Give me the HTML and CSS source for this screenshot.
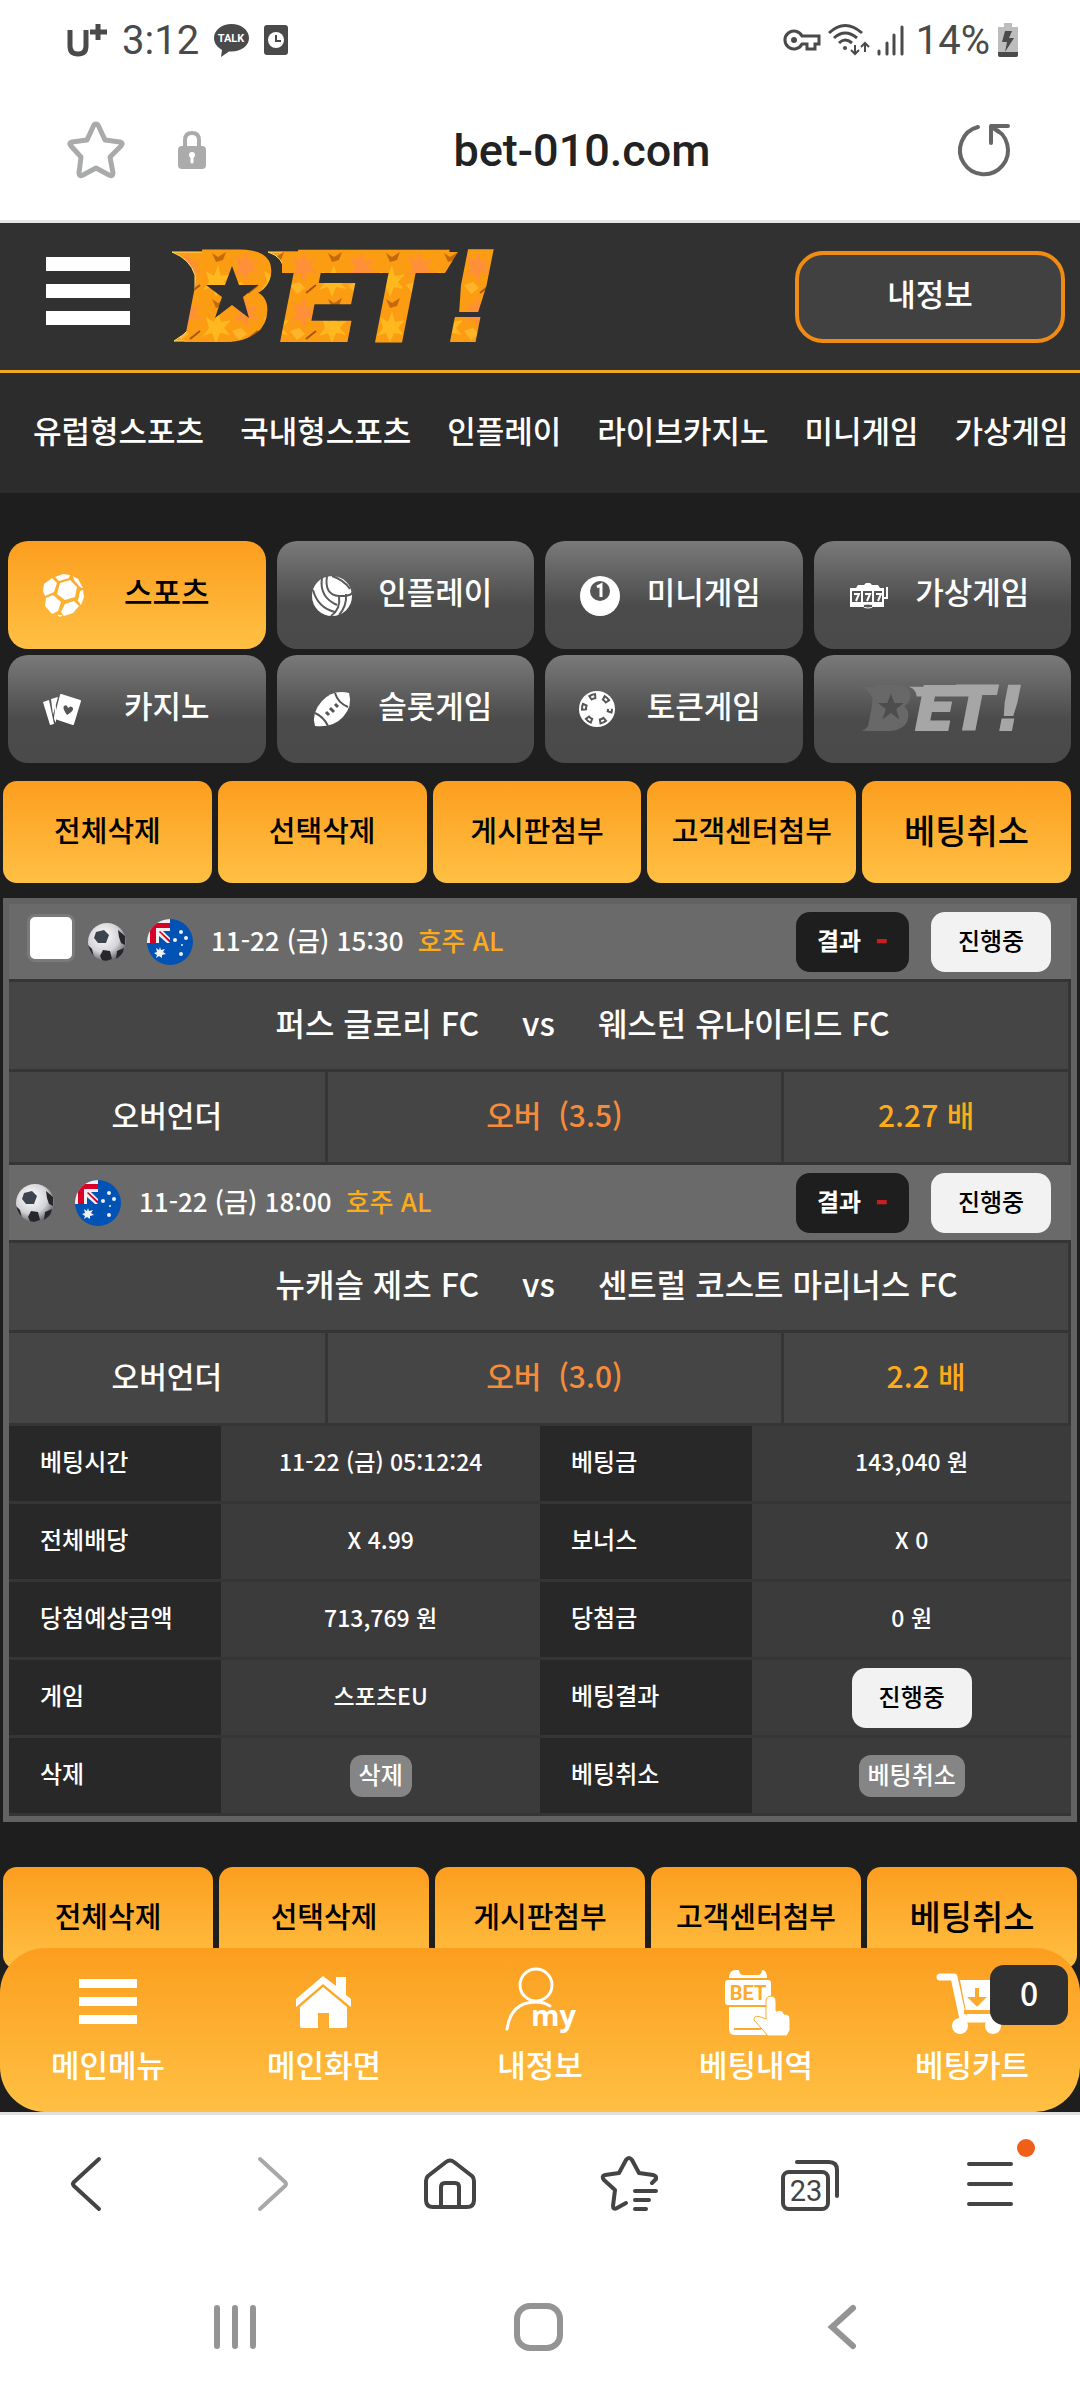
FILE: index.html
```html
<!DOCTYPE html>
<html lang="ko">
<head>
<meta charset="utf-8">
<meta name="viewport" content="width=device-width, initial-scale=1">
<title>bet-010.com</title>
<link rel="stylesheet" href="styles.css">
</head>
<body>

<svg class="defs" aria-hidden="true">
  <defs>
    <pattern id="leaves" width="58" height="46" patternUnits="userSpaceOnUse">
      <rect width="58" height="46" fill="#fc9c12"/>
      <path d="M4 4l8 6 4-10 3 11 10-3-7 8 8 6-11-1-3 10-4-9-10 3 7-8z" fill="#ff8f38"/>
      <path d="M34 20l8 5 4-11 3 11 10-2-7 8 6 7-10-2-4 10-4-10-9 3 6-8z" fill="#ffb81e"/>
      <path d="M40 2l6 4 8-5-3 8-7 2z" fill="#c46a0c"/>
      <path d="M2 34l9-3 6 6-8 6z" fill="#ffb52a"/>
      <path d="M18 42l10-8" stroke="#a8560a" stroke-width="2"/>
    </pattern>
    <radialGradient id="ballShade" cx=".4" cy=".35" r=".7">
      <stop offset="0" stop-color="#fff"/><stop offset=".6" stop-color="#d4d4d8"/><stop offset="1" stop-color="#55565c"/>
    </radialGradient>
    <clipPath id="round"><circle cx="23" cy="23" r="23"/></clipPath>
    <clipPath id="roundBall"><circle cx="20" cy="20" r="19"/></clipPath>
    <symbol id="ball" viewBox="0 0 40 40">
      <circle cx="20" cy="20" r="19" fill="url(#ballShade)"/>
      <g clip-path="url(#roundBall)" fill="#25272b">
        <path d="M9 10l8-2 5 5-3 8-8 0-4-5z" fill="#3c444d"/>
        <path d="M31 8l7 6v9l-4-2-2-6z"/>
        <path d="M16 28l7 1 2 8-9 3-3-6z"/>
        <path d="M0 22l5 5 2 8-6-3zM30 29l7-3-2 8-6 3z"/>
      </g>
    </symbol>
    <symbol id="flag-au" viewBox="0 0 46 46">
      <g clip-path="url(#round)">
        <rect width="46" height="46" fill="#0052b4"/>
        <path d="M0 0h23v24H0z" fill="#f0f0f0"/>
        <path d="M0 4h23v5H9v15H3V4z" fill="#d80027"/>
        <path d="M16 12h7v7zM12 17l8 7h-8z" fill="#0052b4"/>
        <path d="M13 12l10 9v3L12 13z" fill="#d80027"/>
        <path d="M13 28l1 3 4-1-2 3 3 2-4 1 0 3-3-2-3 2 1-3-3-2 3-1-1-4 3 2z" fill="#f0f0f0"/>
        <g fill="#f0f0f0"><circle cx="34" cy="13" r="2"/><circle cx="39" cy="19" r="2"/><circle cx="28" cy="21" r="2"/><circle cx="35" cy="26" r="1"/><circle cx="34" cy="35" r="2"/></g>
      </g>
    </symbol>
  </defs>
</svg>

<div class="statusbar">
  <div class="status-group">
    <svg width="40" height="34" viewBox="0 0 40 34" class="carrier" aria-hidden="true"><path d="M3 7v16q0 8 8 8t8-8V7M31 1v16M23 9h17"/></svg>
    <span class="clock">3:12</span>
    <svg width="35" height="33" viewBox="0 0 35 33" aria-hidden="true"><path d="M17.500 0C8 0 0 6 0 14c0 5 3 9 8 12L7 33l8-5.500h2.500C27 27.500 35 22 35 14S27 0 17.500 0z" fill="#4a4a4a"/><text x="17" y="18" class="talk">TALK</text></svg>
    <svg width="24" height="30" viewBox="0 0 24 30" aria-hidden="true"><rect width="24" height="30" rx="3" fill="#4a4a4a"/><circle cx="12" cy="15" r="8" fill="#fff"/><path d="M12 10v6h5" fill="none" stroke="#4a4a4a" stroke-width="2"/></svg>
  </div>
  <div class="status-group status-right">
    <svg width="37" height="24" viewBox="0 0 37 24" aria-hidden="true"><path d="M19 8h17v8h-4v5h-8v-5h-5a9 9 0 1 1 0-8z" fill="none" stroke="#4a4a4a" stroke-width="3"/><circle cx="11" cy="12" r="3" fill="#4a4a4a"/></svg>
    <svg width="41" height="34" viewBox="0 0 41 34" aria-hidden="true"><g fill="none" stroke="#4a4a4a" stroke-width="3"><path d="M1 10q16-15 33 0M6 15q11-10 23 0M11 20q6-6 13 0"/><path d="M27 22v9m-4-4l4 4 4-4M37 29v-9m-4 4l4-4 4 4" stroke-width="2"/></g><circle cx="17" cy="25" r="2" fill="#4a4a4a"/></svg>
    <svg width="27" height="32" viewBox="0 0 27 32" aria-hidden="true"><path d="M2 27v3M10 19v11M17 11v19M25 3v27" stroke="#4a4a4a" stroke-width="3" stroke-linecap="round"/></svg>
    <span class="battery-level">14%</span>
    <svg width="20" height="34" viewBox="0 0 20 34" aria-hidden="true"><path d="M6 0h8v4h6v28q0 2-2 2H2q-2 0-2-2V4h6z" fill="#bdbdbd"/><path d="M0 29h20v3q0 2-2 2H2q-2 0-2-2z" fill="#4a4a4a"/><path d="M7 8h7l-3 7h5L7 29l2-10H4z" fill="#4a4a4a"/></svg>
  </div>
</div>

<div class="urlbar">
  <div class="url-left">
    <button class="bare" aria-label="즐겨찾기"><svg width="58" height="58" viewBox="0 0 58 58"><path d="M29 3q2 0 3 3l6 13 15 2q4 1 1 4L43 36l3 16q0 4-4 2L29 47 16 54q-4 2-4-2l2-16L4 25q-3-3 1-4l15-2 6-13q1-3 3-3z" fill="none" stroke="#a9abaa" stroke-width="5" stroke-linejoin="round"/></svg></button>
    <svg class="lock" width="28" height="38" viewBox="0 0 28 38" aria-hidden="true"><path d="M7 16V9q0-7 7-7t7 7v7" fill="none" stroke="#ababab" stroke-width="4"/><rect y="15" width="28" height="23" rx="4" fill="#ababab"/><circle cx="14" cy="24" r="3" fill="#fff"/><path d="M14 24v7" stroke="#fff" stroke-width="3" stroke-linecap="round"/></svg>
  </div>
  <span class="url">bet-010.com</span>
  <button class="bare" aria-label="새로고침"><svg width="52" height="54" viewBox="0 0 52 54"><path d="M20 4A24 24 0 1 0 35 5M50 3H33v17M34 4l7 5" fill="none" stroke="#666" stroke-width="4" stroke-linecap="round" stroke-linejoin="round"/></svg></button>
</div>

<div class="site">
  <header class="header">
    <button class="bare menu" aria-label="메뉴"><svg width="84" height="68" viewBox="0 0 84 68"><path d="M0 0h84v14H0zM0 27h84v14H0zM0 54h84v14H0z" fill="#fff"/></svg></button>
    <a href="#" class="logo" aria-label="BET!"><svg width="326" height="92" viewBox="0 0 326 92">
      <path d="M0 1h60v89H2q20-12 21-24V24Q18 8 0 1zM96 1h40v20h-24Q112 6 96 1z" fill="url(#leaves)" stroke="#ffdf6a" stroke-width="1"/>
      <path d="M110 1h176l-13 21H110z" fill="url(#leaves)"/>
      <g class="wordmark" fill="url(#leaves)" stroke="url(#leaves)" stroke-width="4">
        <text x="12" y="89">B</text><text x="108" y="89">E</text><text x="184" y="89">T</text><text x="272" y="89">!</text>
      </g>
      <path d="M34 14h46v58H34z" fill="url(#leaves)"/>
      <path d="M60 15l7 19h19L71 46l6 21-17-13-17 13 7-21-16-12h19z" fill="#313131"/>
    </svg></a>
    <button class="my-info">내정보</button>
  </header>

  <nav class="top-nav">
    <a href="#">유럽형스포츠</a><a href="#">국내형스포츠</a><a href="#">인플레이</a><a href="#">라이브카지노</a><a href="#">미니게임</a><a href="#">가상게임</a>
  </nav>

  <main>
    <div class="tiles">
      <a href="#" class="tile active"><svg width="42" height="44" viewBox="0 0 42 44" aria-hidden="true"><g fill="#fff"><path d="M18 10l10-3 7 7-2 10-10 3-8-6zM13 4l8-3 7 1-1 3-10 3zM31 3l5 3 5 9-3-1-6-7zM2 11l8-6 5 5-3 9-9 4-2-5zM11 22l8 7-3 9-6 3-7-8 1-8zM23 31l9-3 5 5-6 7-9 3-3-4zM41 17l1 7-3 8-3-4 2-10zM15 42l6 0-3 2z"/></g></svg><span>스포츠</span></a>
      <a href="#" class="tile"><svg width="42" height="44" viewBox="0 0 42 44" aria-hidden="true"><circle cx="21" cy="23" r="20" fill="#fff"/><g fill="none" stroke="#5a5a5a" stroke-width="2"><path d="M16 3Q13 22 28 23T42 16M11 5Q8 24 26 32M28 23Q30 36 20 43M21 3q12 4 18 13M35 21q1 12-7 21M2 17q5 18 22 22"/></g></svg><span>인플레이</span></a>
      <a href="#" class="tile"><svg width="42" height="44" viewBox="0 0 42 44" aria-hidden="true"><circle cx="21" cy="23" r="20" fill="#fff"/><circle cx="21" cy="18" r="10" fill="#555"/><path d="M18 14l4-2v12" fill="none" stroke="#fff" stroke-width="3"/></svg><span>미니게임</span></a>
      <a href="#" class="tile"><svg width="42" height="44" viewBox="0 0 42 44" aria-hidden="true"><path d="M8 15l2-3h6l2-2h4l2 2h6l2 3h4v19H2V15z" fill="#fff"/><path d="M4 18h9v11H4zM15 18h9v11h-9zM26 18h8v11h-8z" fill="#555"/><path d="M6 21h5l-3 7M17 21h5l-3 7M28 21h5l-3 7" fill="none" stroke="#fff" stroke-width="2"/><path d="M36 25h3V14" fill="none" stroke="#fff" stroke-width="2"/><ellipse cx="20" cy="33" rx="5" ry="2" fill="#555" stroke="#fff"/></svg><span>가상게임</span></a>
      <a href="#" class="tile"><svg width="42" height="44" viewBox="0 0 42 44" aria-hidden="true"><path d="M1 15l6-2 5 24-4 1z" fill="#fff"/><path d="M9 12l7-2-5 18z" fill="#fff"/><path d="M14 12l-2 20 2 4z" fill="#fff"/><path d="M19 8l19 6-7 23-18-6z" fill="#fff" stroke="#fff" stroke-width="2" stroke-linejoin="round"/><path d="M25 28q-5-7-3-9 3-2 4 2 3-3 5 0 1 3-6 7z" fill="#555"/></svg><span>카지노</span></a>
      <a href="#" class="tile"><svg width="42" height="44" viewBox="0 0 42 44" aria-hidden="true"><path d="M38 6Q22 2 11 14T4 39Q22 41 32 30T38 6z" fill="#fff"/><path d="M24 6q3 10 13 14M4 26q9 4 13 13" fill="none" stroke="#555" stroke-width="2"/><path d="M15 25l3 3M19 21l4 4M24 17l3 3" stroke="#555" stroke-width="3"/></svg><span>슬롯게임</span></a>
      <a href="#" class="tile"><svg width="42" height="44" viewBox="0 0 42 44" aria-hidden="true"><circle cx="18" cy="22" r="18" fill="#fff"/><circle cx="18" cy="22" r="13" fill="none" stroke="#555" stroke-width="6" stroke-dasharray="7 7" stroke-dashoffset="3"/><circle cx="18" cy="22" r="13" fill="none" stroke="#fff" stroke-width="2" stroke-dasharray="3 11" stroke-dashoffset="1"/></svg><span>토큰게임</span></a>
      <a href="#" class="tile tile-logo" aria-label="BET!"><svg width="162" height="46" viewBox="0 0 326 92">
        <path d="M0 1h60v89H2q20-12 21-24V24Q18 8 0 1z" fill="#686868"/>
        <g class="wordmark" stroke-width="4">
          <text x="12" y="89" fill="#686868" stroke="#686868">B</text>
          <path d="M96 1h148l-8 20H112Q112 6 96 1z" fill="#a6a6a6"/>
          <g fill="#a6a6a6" stroke="#a6a6a6"><text x="108" y="89">E</text><text x="184" y="89">T</text><text x="272" y="89">!</text></g>
        </g>
        <path d="M34 14h46v58H34z" fill="#686868"/>
        <path d="M60 15l7 19h19L71 46l6 21-17-13-17 13 7-21-16-12h19z" fill="#4d4d4d"/>
      </svg></a>
    </div>

    <div class="actions">
      <button>전체삭제</button><button>선택삭제</button><button>게시판첨부</button><button>고객센터첨부</button><button class="strong">베팅취소</button>
    </div>

    <section class="slip">
      <div class="match-head">
        <input type="checkbox" class="pick" aria-label="베팅 선택">
        <svg class="ball" width="40" height="40" aria-hidden="true"><use href="#ball"/></svg>
        <svg class="flag" width="46" height="46" aria-hidden="true"><use href="#flag-au"/></svg>
        <span class="when">11-22 (금) 15:30</span><span class="league">호주 AL</span>
        <span class="result">결과 <b>-</b></span><span class="state">진행중</span>
      </div>
      <div class="teams"><span class="home">퍼스 글로리 FC</span><span>vs</span><span>웨스턴 유나이티드 FC</span></div>
      <table class="odds"><tr><td>오버언더</td><td class="choice">오버&nbsp; (3.5)</td><td class="rate">2.27 배</td></tr></table>

      <div class="match-head second">
        <svg class="ball" width="40" height="40" aria-hidden="true"><use href="#ball"/></svg>
        <svg class="flag" width="46" height="46" aria-hidden="true"><use href="#flag-au"/></svg>
        <span class="when">11-22 (금) 18:00</span><span class="league">호주 AL</span>
        <span class="result">결과 <b>-</b></span><span class="state">진행중</span>
      </div>
      <div class="teams"><span class="home">뉴캐슬 제츠 FC</span><span>vs</span><span>센트럴 코스트 마리너스 FC</span></div>
      <table class="odds"><tr><td>오버언더</td><td class="choice">오버&nbsp; (3.0)</td><td class="rate">2.2 배</td></tr></table>

      <table class="details">
        <tr><th>베팅시간</th><td>11-22 (금) 05:12:24</td><th>베팅금</th><td>143,040 원</td></tr>
        <tr><th>전체배당</th><td>X 4.99</td><th>보너스</th><td>X 0</td></tr>
        <tr><th>당첨예상금액</th><td>713,769 원</td><th>당첨금</th><td>0 원</td></tr>
        <tr><th>게임</th><td>스포츠EU</td><th>베팅결과</th><td><span class="state">진행중</span></td></tr>
        <tr><th>삭제</th><td><button class="small">삭제</button></td><th>베팅취소</th><td><button class="small">베팅취소</button></td></tr>
      </table>
    </section>

    <div class="actions actions-bottom">
      <button>전체삭제</button><button>선택삭제</button><button>게시판첨부</button><button>고객센터첨부</button><button class="strong">베팅취소</button>
    </div>
  </main>

  <nav class="tabbar">
    <a href="#"><svg width="72" height="70" viewBox="0 0 72 70" aria-hidden="true"><path d="M7 13h58v9H7zM7 31h58v9H7zM7 49h58v9H7z" fill="#fff"/></svg>메인메뉴</a>
    <a href="#"><svg width="72" height="70" viewBox="0 0 72 70" aria-hidden="true"><path d="M8 33L35 10l13 10v-9h10v18l5 4v8L35 18 8 41z" fill="#fff"/><path d="M12 41l23-20 24 20v19q0 2-2 2H41V47H30v15H14q-2 0-2-2z" fill="#fff"/></svg>메인화면</a>
    <a href="#"><svg width="72" height="70" viewBox="0 0 72 70" aria-hidden="true"><g fill="none" stroke="#fff" stroke-width="3" stroke-linecap="round"><circle cx="32" cy="19" r="16"/><path d="M3 63q4-27 29-27 8 0 14 4"/></g><text x="27" y="60" class="my">my</text></svg>내정보</a>
    <a href="#"><svg width="72" height="70" viewBox="0 0 72 70" aria-hidden="true"><path d="M9 12q0-8 7-8h3q0 5 5 5h13q5 0 5-5 5 0 5 8z" fill="#fff"/><rect x="5" y="14" width="46" height="25" rx="3" fill="#fff"/><path d="M9 41h37v28H15q-6 0-6-6z" fill="#fff"/><path d="M14 63h27" stroke="#fcab2c" stroke-width="2"/><text x="28" y="34" class="bet">BET</text><path d="M46 36q0-6 5-6t5 6v9q7-2 8 3 6 0 6 5v11l-3 6H48l-14-16q-1-7 12-1z" fill="#fff" stroke="#fcab2c" stroke-width="1"/></svg>베팅내역</a>
    <a href="#" class="cart"><svg width="72" height="70" viewBox="0 0 72 70" aria-hidden="true"><path d="M4 11h14l9 42h35" fill="none" stroke="#fff" stroke-width="7" stroke-linejoin="round" stroke-linecap="round"/><path d="M24 14h46l-8 37H31z" fill="#fff"/><circle cx="24" cy="60" r="8" fill="#fff"/><circle cx="57" cy="60" r="8" fill="#fff"/><path d="M41 22v10m-5 1l5 5 5-5zM28 46h34" fill="#fcab2c" stroke="#fcab2c" stroke-width="4"/></svg>베팅카트<span class="badge">0</span></a>
  </nav>
</div>

<div class="toolbar">
  <button class="bare" aria-label="뒤로"><svg width="60" height="60" viewBox="0 0 60 60"><path d="M39 5L14 28q-2 2 0 4l25 23"/></svg></button>
  <button class="bare dim" aria-label="앞으로"><svg width="60" height="60" viewBox="0 0 60 60"><path d="M20 5l25 23q2 2 0 4L20 55"/></svg></button>
  <button class="bare" aria-label="홈"><svg width="60" height="60" viewBox="0 0 60 60"><path d="M26 8q4-3 8 0l18 14q2 2 2 5v19q0 7-7 7H13q-7 0-7-7V27q0-3 2-5zM21 53V33q0-4 4-4h10q4 0 4 4v20"/></svg></button>
  <button class="bare" aria-label="북마크"><svg width="60" height="60" viewBox="0 0 60 60"><path d="M26 49l-9 5q-4 2-4-2l2-16L4 26q-3-4 1-5l14-2 7-13q3-4 6 0l7 13 14 2q4 1 3 4l-4 4M35 37h21M35 46h14M35 55h11"/></svg></button>
  <button class="bare" aria-label="탭"><svg width="60" height="60" viewBox="0 0 60 60"><rect x="3" y="18" width="45" height="37" rx="6"/><path d="M17 8h32q8 0 8 8v26"/><text x="26" y="47" class="tabs-count">23</text></svg></button>
  <button class="bare has-dot" aria-label="메뉴"><svg width="60" height="60" viewBox="0 0 60 60"><path d="M9 10h42M9 30h42M9 50h42"/></svg><span class="dot"></span></button>
</div>

<div class="sysnav">
  <button class="bare" aria-label="최근"><svg width="48" height="48" viewBox="0 0 48 48"><path d="M6 5v38M24 5v38M42 5v38"/></svg></button>
  <button class="bare" aria-label="홈 화면"><svg width="48" height="48" viewBox="0 0 48 48"><rect x="3" y="3" width="43" height="42" rx="13"/></svg></button>
  <button class="bare" aria-label="이전"><svg width="48" height="48" viewBox="0 0 48 48"><path d="M36 5L15 24l21 19"/></svg></button>
</div>
</body>
</html>
```
FILE: styles.css
```css
* { box-sizing: border-box; }

body {
  margin: 0;
  background: #fff;
  color: #fff;
  font-family: "Noto Sans CJK KR", sans-serif;
  font-size: 24px;
  font-weight: 500;
}

a { color: inherit; text-decoration: none; }
svg { display: block; flex: none; overflow: visible; }
button { border: 0; margin: 0; padding: 0; color: inherit; font: inherit; }
.bare { background: none; }
.defs { position: absolute; width: 0; height: 0; }

/* phone status bar */
.statusbar {
  display: flex;
  justify-content: space-between;
  align-items: center;
  height: 80px;
  padding: 0 62px 0 67px;
  color: #4a4a4a;
  font-family: Roboto, sans-serif;
  font-size: 40px;
  font-weight: 400;
}
.status-group { display: flex; align-items: center; gap: 15px; }
.status-right { gap: 8px; }
.carrier { fill: none; stroke: #4a4a4a; stroke-width: 5px; }
.battery-level { margin-left: 4px; }
.talk { font: 700 11px Roboto, sans-serif; fill: #fff; text-anchor: middle; }

/* browser address bar */
.urlbar {
  display: flex;
  justify-content: space-between;
  align-items: center;
  height: 143px;
  padding: 0 70px 0 67px;
  border-bottom: 3px solid #e4e6e5;
}
.url-left { display: flex; align-items: center; gap: 53px; }
.url {
  color: #222;
  font-family: Roboto, sans-serif;
  font-size: 45px;
  font-weight: 500;
}

.site {
  position: relative;
  background: #1e1e1e;
  padding-bottom: 143px;
  overflow: hidden;
}

.header {
  display: flex;
  align-items: center;
  height: 150px;
  padding: 0 15px 0 46px;
  background: #313131;
  border-bottom: 3px solid #f0a920;
}
.menu { margin-bottom: 12px; }
.logo { margin-left: 42px; }
.wordmark { font: italic 700 122px "DejaVu Sans", sans-serif; }
.my-info {
  width: 270px;
  height: 92px;
  margin-left: auto;
  padding-bottom: 8px;
  border: 4px solid #f08c14;
  border-radius: 28px;
  background: #414141;
  font-size: 31px;
}

.top-nav {
  display: flex;
  align-items: center;
  gap: 36px;
  height: 120px;
  padding: 0 33px 8px;
  background: #2c2c2c;
  font-size: 31px;
  white-space: nowrap;
}

.tiles {
  display: grid;
  grid-template-columns: repeat(4, 1fr);
  gap: 6px 11px;
  padding: 48px 9px 18px 8px;
}
.tile {
  display: flex;
  align-items: center;
  height: 108px;
  padding: 0 16px 0 34px;
  border-radius: 20px;
  background: linear-gradient(#7a7a7a, #4b4b4b 60%, #4a4a4a);
  font-size: 31px;
}
.tile span { flex: 1; text-align: center; line-height: 46px; padding-bottom: 8px; }
.tile.active { background: linear-gradient(#fc9e1f, #ffc043); color: #000; }
.tile-logo { justify-content: center; padding: 0; }

.actions {
  display: flex;
  gap: 6px;
  padding: 0 9px 15px 3px;
}
.actions button {
  flex: 1 1 0;
  height: 102px;
  padding-bottom: 6px;
  border-radius: 14px;
  background: linear-gradient(#fc9e1f, #ffc043);
  color: #000;
  font-size: 29px;
  white-space: nowrap;
}
.actions .strong { font-size: 34px; }
.actions-bottom { padding: 45px 3px 0; }

/* betting slip */
.slip {
  margin: 0 3px;
  border: 6px solid #626262;
  background: #454545;
}
.match-head {
  display: flex;
  align-items: center;
  height: 78px;
  padding: 0 20px 0 18px;
  background: #6a6a6a;
  border-bottom: 3px solid #353535;
  font-size: 26px;
}
.match-head.second { padding-left: 6px; }
.pick {
  appearance: none;
  width: 48px;
  height: 48px;
  margin: 0 12px 8px 0;
  border: 3px solid #7a7a7a;
  border-radius: 8px;
  background: #fff;
}
.flag { margin: 0 18px 0 20px; }
.when, .league { padding-bottom: 4px; }
.league { margin-left: 14px; color: #fcab1a; }
.result, .state {
  display: inline-flex;
  align-items: center;
  justify-content: center;
  height: 60px;
  padding-bottom: 4px;
  border-radius: 14px;
  font-size: 24px;
}
.result {
  gap: 14px;
  width: 113px;
  margin: 0 22px 0 auto;
  background: #1e1e1e;
  font-weight: 700;
}
.result b { color: #c81e1e; font-size: 34px; line-height: 40px; }
.state { width: 120px; background: #f2f2f2; color: #000; }

.teams {
  display: grid;
  grid-template-columns: 1fr auto 1fr;
  align-items: center;
  gap: 43px;
  height: 90px;
  border-right: 3px solid #353535;
  border-bottom: 3px solid #353535;
  padding-bottom: 8px;
  font-size: 32px;
  white-space: nowrap;
}
.home { text-align: right; }

table { width: 100%; table-layout: fixed; border-collapse: separate; border-spacing: 0; }
td, th { padding: 0 0 6px; font-weight: 500; }
td { text-align: center; }
.odds td {
  height: 93px;
  border-right: 3px solid #353535;
  border-bottom: 3px solid #353535;
  font-size: 30px;
}
.odds td:first-child { width: 30%; }
.odds td:last-child { width: 27%; }
.odds .choice { color: #f58c3c; }
.odds .rate { color: #fcab1a; }

.details td, .details th { height: 78px; border-bottom: 3px solid #353535; line-height: 34px; }
.details th {
  width: 20%;
  padding-left: 31px;
  background: #282828;
  text-align: left;
}
.details td { width: 30%; background: #3b3b3b; font-size: 23px; }
.details td:has(.state), .details td:has(.small) { padding: 0; }
.details .state { vertical-align: middle; }
.small {
  height: 42px;
  padding: 0 9px 4px;
  border-radius: 12px;
  background: #858585;
  font-size: 24px;
  line-height: 38px;
  vertical-align: middle;
}

/* bottom tab bar over the end of the page */
.tabbar {
  position: absolute;
  left: 0;
  right: 0;
  bottom: 0;
  display: flex;
  height: 164px;
  border-radius: 45px;
  background: linear-gradient(#fc9e1f, #ffc043);
}
.tabbar a {
  flex: 1 1 0;
  display: flex;
  flex-direction: column;
  align-items: center;
  gap: 5px;
  padding-top: 18px;
  font-size: 31px;
  line-height: 46px;
}
.cart { position: relative; }
.badge {
  position: absolute;
  top: 17px;
  right: 12px;
  width: 78px;
  height: 60px;
  border-radius: 14px;
  background: #313131;
  font-size: 32px;
  line-height: 54px;
  text-align: center;
}
.my { font: 700 29px "Open Sans", sans-serif; fill: #fff; }
.bet { font: 700 20px Roboto, sans-serif; fill: #fcab2c; text-anchor: middle; }

/* browser toolbar */
.toolbar {
  display: flex;
  align-items: center;
  height: 141px;
  border-top: 3px solid #e0e0e0;
}
.toolbar button { flex: 1 1 0; display: flex; justify-content: center; position: relative; }
.toolbar svg {
  fill: none;
  stroke: #444;
  stroke-width: 4px;
  stroke-linecap: round;
  stroke-linejoin: round;
}
.toolbar .dim svg { stroke: #a8a8a8; }
.toolbar .tabs-count {
  font: 400 29px Roboto, sans-serif;
  fill: #444;
  stroke: none;
  text-anchor: middle;
}
.dot {
  position: absolute;
  top: -15px;
  right: 45px;
  width: 18px;
  height: 18px;
  border-radius: 50%;
  background: #f05f18;
}

/* system navigation */
.sysnav { display: flex; align-items: center; height: 147px; padding: 0 88px 0 84px; }
.sysnav button { flex: 1 1 0; display: flex; justify-content: center; }
.sysnav svg { fill: none; stroke: #949494; stroke-width: 6px; stroke-linecap: round; }
```
